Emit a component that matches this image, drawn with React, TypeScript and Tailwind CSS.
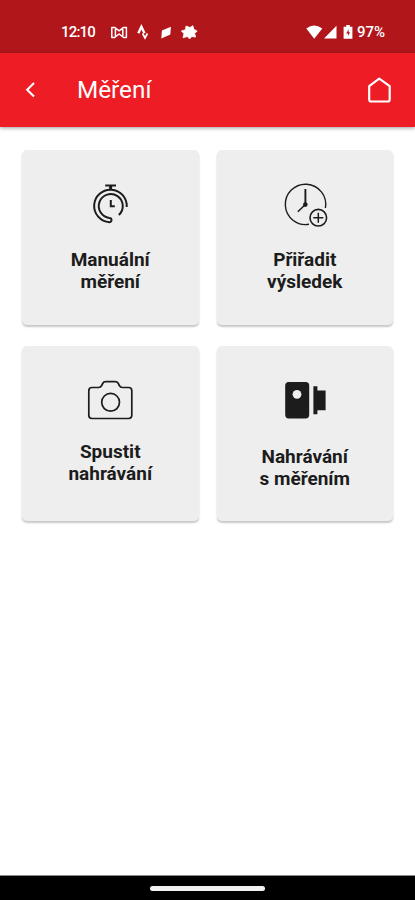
import type { ReactNode } from "react";

function StopwatchIcon() {
  return (
    <svg width="60" height="54" viewBox="80 178 60 54" fill="none" stroke="#1c1c1c" strokeWidth="2">
      <path d="M105.2 185.5H116" />
      <path d="M110.6 186v4" strokeWidth="3" />
      <path d="M126.7 207A16.3 16.3 0 1 0 109.4 222.2A2.1 2.1 0 0 0 109.4 218A12 12 0 1 1 118.8 215" />
      <path d="M110.8 200v6.2h4" />
    </svg>
  );
}

function ClockPlusIcon() {
  return (
    <svg width="60" height="54" viewBox="275 178 60 54" fill="none" stroke="#1c1c1c" strokeWidth="1.4">
      <path d="M325.4 208A20.2 20.2 0 1 0 309 224.3" />
      <path d="M305.4 189v16" strokeWidth="1.9" />
      <path d="M305.4 204.5L297.8 211.8" strokeWidth="1.5" />
      <circle cx="305.3" cy="204.6" r="2.3" fill="#1c1c1c" stroke="none" />
      <circle cx="318.3" cy="217.7" r="8.3" strokeWidth="1.6" />
      <path d="M313.3 217.7h10M318.3 212.7v10" strokeWidth="1.5" />
    </svg>
  );
}

function CameraIcon() {
  return (
    <svg width="60" height="54" viewBox="80 374 60 54" fill="none" stroke="#1c1c1c" strokeWidth="1.7" strokeLinejoin="round">
      <path d="M92 387.5h6.5c1.7 0 2.5-.6 3.2-2l1-2c.7-1.4 1.4-1.9 3-1.9h9.6c1.6 0 2.3.5 3 1.9l1 2c.7 1.4 1.5 2 3.2 2h6.1a3.2 3.2 0 0 1 3.2 3.2v24.6a3.2 3.2 0 0 1-3.2 3.2H92a3.2 3.2 0 0 1-3.2-3.2v-24.6a3.2 3.2 0 0 1 3.2-3.2z" />
      <circle cx="110.6" cy="402.3" r="8.9" />
    </svg>
  );
}

function ActionCameraIcon() {
  return (
    <svg width="60" height="54" viewBox="275 374 60 54" fill="#1c1c1c">
      <rect x="285.2" y="382" width="24" height="36.4" rx="3.6" />
      <circle cx="297" cy="394.3" r="4.4" fill="#eee" />
      <path d="M313.4 386.2h4v4.2h8.2v19.8h-8.2v4h-4z" />
    </svg>
  );
}

const labelOffset = { normal: "mt-[17px]", raised: "mt-[13px]", lowered: "mt-[18px]" };

function Card({ icon, lines, label = "normal" }: { icon: ReactNode; lines: [string, string]; label?: keyof typeof labelOffset }) {
  return (
    <button className="flex h-[175px] flex-col items-center rounded-[5px] bg-[#eeeeee] pt-7 text-[#1c1c1c] shadow-[0_2px_2px_rgba(0,0,0,0.22)]">
      {icon}
      <span className={`text-[19px] leading-[22px] font-bold ${labelOffset[label]}`}>
        {lines[0]}
        <br />
        {lines[1]}
      </span>
    </button>
  );
}

function StatusBar() {
  return (
    <div className="flex h-[53px] items-center bg-[#b1161b] pt-[11px] pl-[61px] text-[15px] font-medium text-white">
      <span className="w-[49px] tracking-[-0.8px]">12:10</span>
      <svg width="90" height="20" viewBox="110 22 90 20" fill="none" stroke="#fff" strokeWidth="1.5">
        <path d="M111.8 27.4h2.8l4.5 3.4 4.5-3.4h2.8v10h-2.8l-4.5-3.4-4.5 3.4h-2.8zM115.4 29v7M122.8 29v7" strokeLinejoin="round" />
        <path d="M138.3 33.2l3.1-6.5 3.1 6.5" strokeWidth="2.4" />
        <path d="M142.6 33.5l2.4 4.4 2.4-4.4" strokeWidth="1.7" />
        <path d="M161.3 38.6l.6-8 9-3.8-.6 7.8z" fill="#fff" stroke="none" />
        <path d="M186 26l3.9 1.5 3-1.8.8 3.4 3.5 2.1-2.6 2 1 3.9-3.7-.6-2.3 2.4-2.3-2.4-4.3 1.3 1-4.2-2.7-2.5 4.2-1.4z" fill="#fff" stroke="#fff" strokeWidth=".8" />
      </svg>
      <svg className="ml-[106px]" width="50" height="20" viewBox="306 22 50 20" fill="#fff">
        <path d="M306.3 28.5Q314 22.5 322.3 28.5L314.2 38.8z" />
        <path d="M324 38.5L336.5 25.7v12.8z" />
        <path d="M346.2 25h3.6v1.7h2.6v12h-8.8v-12h2.6z" />
        <path d="M348.6 29.2l-2.4 4.2h1.8v2.6l2.1-3.8h-1.5z" fill="#b1161b" />
      </svg>
      <span className="ml-[1px]">97%</span>
    </div>
  );
}

export default function App() {
  return (
    <div className="flex h-[900px] w-[415px] flex-col overflow-hidden bg-white font-['Roboto',sans-serif]">
      <StatusBar />
      <header className="flex h-[74px] items-center bg-[#ee1c25] pl-[22px] text-white shadow-[0_1px_4px_rgba(0,0,0,0.4)]">
        <svg width="16" height="20" viewBox="22 80 16 20" fill="none" stroke="#fff" strokeWidth="2.1">
          <path d="M34 83l-6.8 6.8 6.8 6.8" />
        </svg>
        <h1 className="ml-[39px] flex-1 text-[24.3px]">Měření</h1>
        <svg className="mr-[20px]" width="32" height="32" viewBox="363 74 32 32" fill="none" stroke="#fff" strokeWidth="2.2" strokeLinejoin="round">
          <path d="M369.2 86.2l10-7.6 10.5 7.6v13.3a2 2 0 0 1-2 2h-16.5a2 2 0 0 1-2-2z" />
        </svg>
      </header>
      <main className="grid flex-1 grid-cols-2 content-start gap-x-[18px] gap-y-[21px] px-[22px] pt-[23px]">
        <Card icon={<StopwatchIcon />} lines={["Manuální", "měření"]} />
        <Card icon={<ClockPlusIcon />} lines={["Přiřadit", "výsledek"]} />
        <Card icon={<CameraIcon />} lines={["Spustit", "nahrávání"]} label="raised" />
        <Card icon={<ActionCameraIcon />} lines={["Nahrávání", "s měřením"]} label="lowered" />
      </main>
      <nav className="flex h-[25px] items-center justify-center border-t border-[#888] bg-black">
        <span className="h-[5px] w-[115px] rounded-full bg-[#f2f2f2]" />
      </nav>
    </div>
  );
}
